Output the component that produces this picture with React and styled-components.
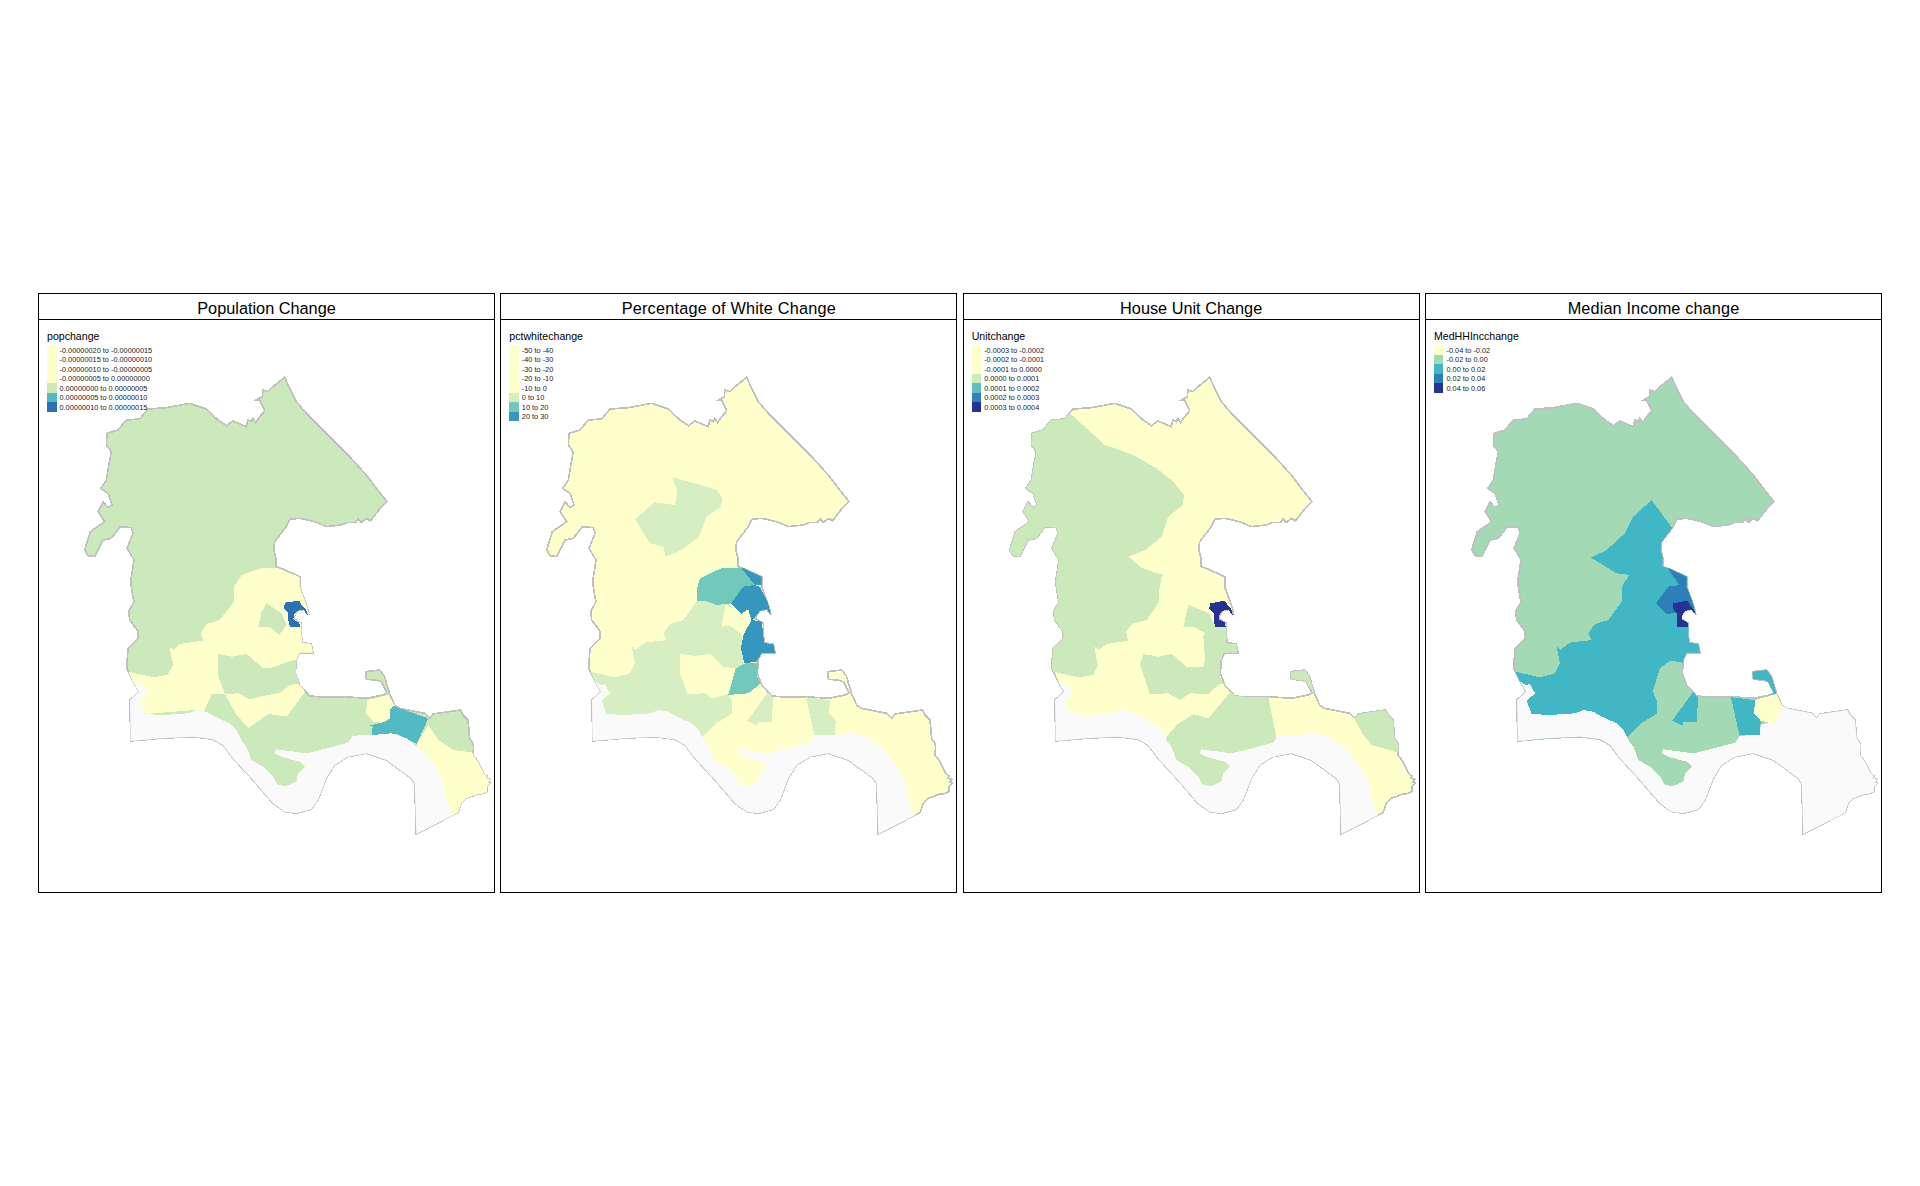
import styled, { createGlobalStyle } from 'styled-components';

// map coordinates are 3x full-size pixels, y of the lower half goes through L()
const L = (s) =>
  s
    .trim()
    .split(/\s+/)
    .map((p) => {
      const [x, y] = p.split(',');
      return `${x},${Number(y) + 855}`;
    })
    .join(' ');

const OUTLINE = `755,277 770,310 790,350 820,385 860,425 905,470 950,515 1000,570 1030,610 1062,650 1040,672 1012,708 1002,700 985,712 975,702 968,712 945,712 925,720 880,725 850,712 825,705 800,700 770,703 760,725 725,770 722,795 728,815 728,845 745,850 800,875
${L(`800,50 815,90 822,110 828,135 815,118 795,122 780,145 805,160 805,195 808,218 835,222 840,248 800,248 790,270 787,310 800,345 830,378 880,382 935,380 1000,385 1050,375 1062,370 1045,335 1030,330 1000,328 998,305 1040,300 1055,320 1070,372 1085,405 1100,415 1175,430 1190,445 1200,432 1282,420 1290,435 1305,450 1310,505 1322,525 1320,555 1335,575 1352,610 1362,618 1358,625 1372,628 1365,636 1372,640 1362,650 1362,665 1345,672 1335,672 1300,685 1285,700 1275,728 1150,792 1145,640 1135,625 1060,570 1000,550 945,560 905,585 880,625 855,690 835,718 790,730 755,725 720,700 660,630 600,565 570,525 540,508 480,500 385,505 293,513 291,390 318,365 300,335 281,295 285,235 315,205 316,185 290,150 287,125 303,95 298,70`)}
293,890 303,825 282,790 300,745 295,728 262,725 235,760 210,765 185,815 165,812 155,795 172,740 215,710 195,680 210,650 225,668 237,660 225,625 203,610 220,585 225,555 235,500 220,480 222,445 255,435 280,405 320,402 345,372 400,368 470,355 520,372 555,405 580,422 600,408 640,425 645,405 655,410 660,400 668,412 680,395 695,378 690,365 680,345 670,345 688,335 690,315 705,320 720,305`;

// tracts with no data, painted over everything that gets clipped
const BAND = L(`300,335 318,345 330,342 345,370 320,392 335,432 390,435 465,430 490,420 520,425 545,440 590,460 610,480 625,510 640,530 655,570 690,590 720,620 735,645 760,648 790,635 795,610 815,590 800,575 750,562 725,550 730,538 820,550 900,530 945,518 960,497 1020,495 1075,490 1120,505 1170,545 1210,595 1230,640 1240,685 1255,730 1300,760 1140,830 260,830 260,380`);
const BAND_EAST = L(`1020,495 1022,465 1045,458 1065,460 1078,440 1085,405 1100,395 1420,395 1420,800 1250,800 1100,560`);

const Y = '#ffffcc';

const PANELS = [
  {
    title: 'Population Change',
    field: 'popchange',
    base: '#cce9bc',
    dx: -9,
    legend: [
      ['-0.00000020 to -0.00000015', Y],
      ['-0.00000015 to -0.00000010', Y],
      ['-0.00000010 to -0.00000005', Y],
      ['-0.00000005 to 0.00000000', Y],
      ['0.00000000 to 0.00000005', '#cce9bc'],
      ['0.00000005 to 0.00000010', '#52bac2'],
      ['0.00000010 to 0.00000015', '#2b72b4'],
    ],
    tracts: [
      [Y, L(`612,50 635,15 690,-5 740,-7 805,20 860,30 870,100 870,240 830,290 810,340 825,365 770,440 715,432 655,475 620,435 585,372 545,372 522,425 497,420 345,432 325,390 300,350 270,303 295,305 370,322 412,315 430,285 418,230 430,240 450,222 520,212 512,190 530,162 570,150 612,95`)],
      ['#cce9bc', L(`565,252 605,260 650,252 700,295 730,292 760,280 800,268 830,290 810,340 780,345 750,368 700,378 660,388 625,370 585,372 565,320`)],
      ['#cce9bc', L(`710,100 755,130 770,165 748,195 718,170 685,170 695,125`)],
      [Y, L(`1012,390 1075,375 1095,408 1080,425 1080,445 1065,460 1030,455 1008,430`)],
      ['#52bac2', L(`1090,408 1195,445 1160,522 1100,492 1025,495 1028,470 1015,468 1065,455 1080,445 1080,420`)],
      [Y, L(`1195,465 1225,510 1270,540 1330,548 1420,560 1420,760 1270,760 1160,522`)],
    ],
    blobs: [['#2b72b4', L(`765,98 808,92 815,105 828,118 833,135 820,120 802,122 792,135 790,148 808,158 810,170 780,172 775,150 775,130 762,115`)]],
  },
  {
    title: 'Percentage of White Change',
    field: 'pctwhitechange',
    tracking: 0.2,
    base: Y,
    dx: 0,
    legend: [
      ['-50 to -40', Y],
      ['-40 to -30', Y],
      ['-30 to -20', Y],
      ['-20 to -10', Y],
      ['-10 to 0', Y],
      ['0 to 10', '#d6eec2'],
      ['10 to 20', '#72c8bb'],
      ['20 to 30', '#3596c0'],
    ],
    tracts: [
      ['#d6eec2', `532,577 610,598 665,615 682,640 678,665 635,695 612,755 560,795 512,815 505,785 465,775 420,703 478,652 540,660 547,620`],
      ['#d6eec2', L(`607,92 640,95 665,105 708,100 740,195 740,230 745,285 722,296 700,375 712,395 712,430 660,462 620,505 640,560 260,500 260,300 285,305 360,322 405,310 420,280 410,230 420,240 450,218 515,210 505,190 525,162 565,150`)],
      [Y, L(`555,252 600,258 645,252 685,290 722,296 700,372 650,385 630,370 578,372 555,310`)],
      [Y, L(`692,103 738,132 760,118 772,155 745,195 705,168 680,170`)],
      ['#72c8bb', L(`610,40 615,25 655,5 680,-5 745,-5 780,45 745,50 708,100 665,105 640,95 607,92 605,60`)],
      ['#72c8bb', L(`722,296 750,280 792,280 787,320 797,340 760,370 700,375`)],
      ['#3596c0', L(`735,-10 810,10 800,45 780,45`)],
      ['#d6eec2', L(`820,365 833,382 832,455 790,455 787,467 757,452`)],
      ['#d6eec2', L(`933,382 1005,390 1002,430 1022,452 1020,495 958,495`)],
    ],
    blobs: [
      ['#3596c0', L(`745,50 778,45 795,50 815,90 822,110 828,135 815,118 795,122 775,148 770,155 760,118 738,132 708,100`)],
      ['#3596c0', L(`770,150 800,155 805,195 808,220 835,222 840,248 800,248 785,275 748,280 738,235 745,195`)],
    ],
  },
  {
    title: 'House Unit Change',
    field: 'Unitchange',
    base: Y,
    dx: 6,
    legend: [
      ['-0.0003 to -0.0002', Y],
      ['-0.0002 to -0.0001', Y],
      ['-0.0001 to 0.0000', Y],
      ['0.0000 to 0.0001', '#cce9bc'],
      ['0.0001 to 0.0002', '#5fbfc0'],
      ['0.0002 to 0.0003', '#2f81ba'],
      ['0.0003 to 0.0004', '#253494'],
    ],
    tracts: [
      ['#cce9bc', `330,300 330,385 380,430 435,480 520,510 590,550 640,590 672,630 668,660 625,695 605,755 555,795 505,815 545,848 590,865 618,870 ${L(`605,17 598,60 598,95 560,150 520,160 497,185 505,212 440,222 415,240 403,230 413,285 400,315 355,322 280,305 100,305`)} 100,300`],
      ['#cce9bc', L(`540,285 550,252 595,260 635,252 680,290 730,290 735,270 730,200 735,190 700,170 670,170 685,105 748,130 760,160 800,165 805,205 795,220 830,222 832,248 790,248 780,270 780,320 790,340 775,345 745,372 690,370 660,390 625,370 570,372`)],
      ['#cce9bc', L(`612,510 650,465 700,432 745,445 812,365 925,380 948,495 948,600 700,720 640,600`)],
      ['#cce9bc', L(`985,295 1040,295 1065,372 1045,350 1030,335 985,335`)],
      ['#cce9bc', L(`1182,445 1210,495 1235,525 1315,548 1340,500 1290,400 1180,420`)],
    ],
    blobs: [['#253494', L(`750,100 795,92 802,105 814,118 818,135 805,120 788,122 778,135 776,148 795,158 797,170 765,172 762,150 762,130 748,115`)]],
  },
  {
    title: 'Median Income change',
    field: 'MedHHIncchange',
    tracking: 0.12,
    base: '#a3dab5',
    dx: 0,
    eastBand: true,
    legend: [
      ['-0.04 to -0.02', Y],
      ['-0.02 to 0.00', '#a3dab5'],
      ['0.00 to 0.02', '#41b6c4'],
      ['0.02 to 0.04', '#2c7fb8'],
      ['0.04 to 0.06', '#253494'],
    ],
    tracts: [
      ['#41b6c4', `695,645 757,730 800,760 850,815 ${L(`900,40 900,200 850,270 815,270 790,278 750,272 720,295 698,365 712,395 712,430 660,462 620,505 640,560 270,500 270,300 285,305 360,322 405,310 420,280 410,230 420,240 450,218 515,210 505,190 525,162 565,150 605,95 607,50 625,15`)} 610,900 628,870 590,865 513,818 560,795 615,745 640,695`],
      ['#2c7fb8', L(`740,-10 810,10 830,110 760,130 738,132 708,100 745,50 778,45`)],
      ['#41b6c4', L(`820,365 833,382 832,455 790,455 787,467 757,452`)],
      ['#41b6c4', L(`933,382 1005,390 1002,430 1022,452 1020,495 958,495`)],
      [Y, L(`1005,390 1070,372 1085,405 1078,440 1065,460 1045,458 1022,452 1002,430`)],
      ['#41b6c4', L(`990,295 1050,295 1070,370 1055,375 1040,345 1000,335`)],
    ],
    blobs: [['#253494', L(`760,100 803,92 810,105 822,118 828,135 815,120 797,122 787,135 785,148 803,158 805,170 772,172 770,150 770,130 758,115`)]],
  },
];

function ChoroplethMap({ panel, id }) {
  return (
    <MapSvg viewBox="18 105 1365 1716">
      <defs>
        <clipPath id={id}>
          <polygon points={OUTLINE} />
        </clipPath>
      </defs>
      <polygon points={OUTLINE} fill={panel.base} stroke="#c0c0c0" strokeWidth="5" />
      <g clipPath={`url(#${id})`}>
        <g transform={`translate(${panel.dx} 0)`}>
          {panel.tracts.map(([fill, points]) => (
            <polygon key={points} fill={fill} points={points} />
          ))}
        </g>
        <polygon fill="#fafafa" points={BAND} />
        {panel.eastBand && <polygon fill="#fafafa" points={BAND_EAST} />}
      </g>
      <g transform={`translate(${panel.dx} 0)`}>
        {panel.blobs.map(([fill, points]) => (
          <polygon key={points} fill={fill} points={points} />
        ))}
      </g>
    </MapSvg>
  );
}

export default function App() {
  return (
    <Page>
      <GlobalStyle />
      {PANELS.map((panel, i) => (
        <Panel key={panel.field}>
          <Title $tracking={panel.tracking}>{panel.title}</Title>
          <Body>
            <ChoroplethMap panel={panel} id={`outline-${i}`} />
            <Legend>
              <LegendTitle>{panel.field}</LegendTitle>
              {panel.legend.map(([label, color]) => (
                <LegendRow key={label}>
                  <Swatch $color={color} />
                  <LegendLabel>{label}</LegendLabel>
                </LegendRow>
              ))}
            </Legend>
          </Body>
        </Panel>
      ))}
    </Page>
  );
}

const GlobalStyle = createGlobalStyle`
  html, body {
    margin: 0;
    background: #ffffff;
    font-family: "Liberation Sans", Arial, sans-serif;
    color: #000000;
  }
`;

const Page = styled.main`
  box-sizing: border-box;
  width: 1920px;
  height: 1186px;
  padding: 0 38px;
  display: grid;
  grid-template-columns: repeat(4, 457px);
  justify-content: space-between;
  align-content: center;
`;

const Panel = styled.section`
  box-sizing: border-box;
  height: 600px;
  border: 1px solid #000000;
  display: flex;
  flex-direction: column;
`;

const Title = styled.h2`
  margin: 0;
  height: 25px;
  line-height: 28px;
  flex: none;
  box-sizing: content-box;
  border-bottom: 1px solid #000000;
  text-align: center;
  font-size: 16.3px;
  font-weight: 400;
  letter-spacing: ${(p) => p.$tracking || 0}px;
`;

const Body = styled.div`
  position: relative;
  flex: 1;
  min-height: 0;
`;

const MapSvg = styled.svg`
  display: block;
  width: 100%;
  height: 100%;
  shape-rendering: crispEdges;
`;

const Legend = styled.div`
  position: absolute;
  top: 10px;
  left: 8px;
`;

const LegendTitle = styled.div`
  height: 15px;
  font-size: 10.6px;
  line-height: 12px;
  white-space: nowrap;
`;

const LegendRow = styled.div`
  display: flex;
  align-items: center;
  height: 9.55px;
`;

const Swatch = styled.span`
  flex: none;
  width: 9.5px;
  height: 100%;
  margin-right: 3px;
  background: ${(p) => p.$color};
`;

const LegendLabel = styled.span`
  padding-top: 1px;
  font-size: 7.35px;
  line-height: 9.55px;
  color: #1a1a1a;
  white-space: nowrap;
`;
